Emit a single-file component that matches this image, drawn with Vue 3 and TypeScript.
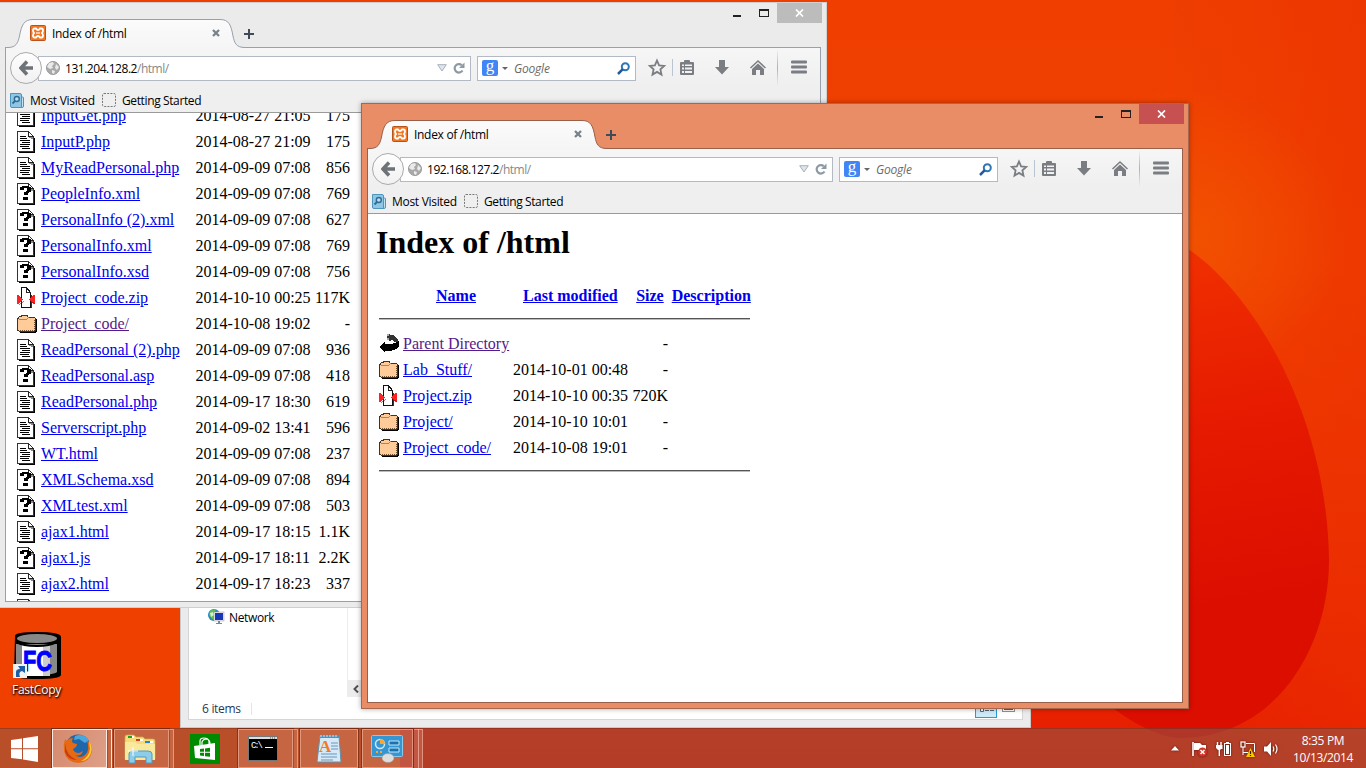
<script setup lang="ts">
type IconKind = 'text' | 'unknown' | 'zip' | 'folder' | 'back'

interface Entry {
  icon: IconKind
  name: string
  date: string
  size: string
  visited?: boolean
}

interface BrowserWindow {
  id: string
  host: string
  active: boolean
  entries: Entry[]
}

const e = (icon: IconKind, name: string, date: string, size: string, visited = false): Entry => ({
  icon, name, date, size, visited,
})

const windows: BrowserWindow[] = [
  {
    id: 'rear',
    host: '131.204.128.2',
    active: false,
    entries: [
      e('text', 'InputGet.php', '2014-08-27 21:05', '175'),
      e('text', 'InputP.php', '2014-08-27 21:09', '175'),
      e('text', 'MyReadPersonal.php', '2014-09-09 07:08', '856'),
      e('unknown', 'PeopleInfo.xml', '2014-09-09 07:08', '769'),
      e('unknown', 'PersonalInfo (2).xml', '2014-09-09 07:08', '627'),
      e('unknown', 'PersonalInfo.xml', '2014-09-09 07:08', '769'),
      e('unknown', 'PersonalInfo.xsd', '2014-09-09 07:08', '756'),
      e('zip', 'Project_code.zip', '2014-10-10 00:25', '117K'),
      e('folder', 'Project_code/', '2014-10-08 19:02', '-', true),
      e('text', 'ReadPersonal (2).php', '2014-09-09 07:08', '936'),
      e('unknown', 'ReadPersonal.asp', '2014-09-09 07:08', '418'),
      e('text', 'ReadPersonal.php', '2014-09-17 18:30', '619'),
      e('text', 'Serverscript.php', '2014-09-02 13:41', '596'),
      e('text', 'WT.html', '2014-09-09 07:08', '237'),
      e('unknown', 'XMLSchema.xsd', '2014-09-09 07:08', '894'),
      e('unknown', 'XMLtest.xml', '2014-09-09 07:08', '503'),
      e('text', 'ajax1.html', '2014-09-17 18:15', '1.1K'),
      e('unknown', 'ajax1.js', '2014-09-17 18:11', '2.2K'),
      e('text', 'ajax2.html', '2014-09-17 18:23', '337'),
      e('text', '', '', ''),
    ],
  },
  {
    id: 'front',
    host: '192.168.127.2',
    active: true,
    entries: [
      e('back', 'Parent Directory', '', '-', true),
      e('folder', 'Lab_Stuff/', '2014-10-01 00:48', '-'),
      e('zip', 'Project.zip', '2014-10-10 00:35', '720K'),
      e('folder', 'Project/', '2014-10-10 10:01', '-'),
      e('folder', 'Project_code/', '2014-10-08 19:01', '-'),
    ],
  },
]
</script>

<template>
  <div class="desktop">
    <svg class="wallpaper" viewBox="0 0 1366 768" preserveAspectRatio="none">
      <defs>
        <linearGradient id="sky" x1="0" y1="0" x2="0" y2="1">
          <stop offset="0" stop-color="#ef3e00" />
          <stop offset="0.35" stop-color="#f14300" />
          <stop offset="0.7" stop-color="#ee3000" />
          <stop offset="1" stop-color="#e61c00" />
        </linearGradient>
        <radialGradient id="glow" gradientUnits="userSpaceOnUse" cx="1190" cy="235" r="150">
          <stop offset="0" stop-color="#f25400" stop-opacity="0.85" />
          <stop offset="1" stop-color="#f25400" stop-opacity="0" />
        </radialGradient>
        <linearGradient id="petal" gradientUnits="userSpaceOnUse" x1="1190" y1="250" x2="1250" y2="600">
          <stop offset="0" stop-color="#f03000" />
          <stop offset="0.5" stop-color="#e61a00" />
          <stop offset="1" stop-color="#dc0e00" />
        </linearGradient>
        <linearGradient id="side" x1="0" y1="0" x2="1" y2="0">
          <stop offset="0.85" stop-color="#ea3000" stop-opacity="0" />
          <stop offset="1" stop-color="#ea3000" stop-opacity="0.5" />
        </linearGradient>
      </defs>
      <rect width="1366" height="768" fill="url(#sky)" />
      <rect y="600" width="400" height="168" fill="#ef4000" />
      <rect width="1366" height="768" fill="url(#side)" />
      <rect x="1000" y="80" width="366" height="320" fill="url(#glow)" />
      <path d="M1100 200Q1150 222 1188 249C1250 290 1327 410 1329 560C1329 650 1274 738 1180 738C1150 736 1120 715 1090 690Z" fill="url(#petal)" />
    </svg>

    <div class="shortcut">
      <svg width="50" height="48" viewBox="0 0 50 48">
        <path d="M3 4Q3 0 25 0Q49 0 49 5V43Q48 47 25 47Q2 47 2 43Z" fill="#000" />
        <path d="M4 12H45V40Q42 43 24 43Q5 43 4 40Z" fill="#888" />
        <path d="M10 13H38V44H10Z" fill="#fff" />
        <path d="M31 13H38V44H31Z" fill="#ccc" />
        <ellipse cx="25" cy="6.500" rx="20" ry="4.500" fill="#888" />
        <path d="M4 9Q12 13 25 13Q38 13 45 9V11Q38 15 25 15Q10 15 4 11Z" fill="#000" />
        <text x="11" y="39" class="fc" textLength="29" lengthAdjust="spacingAndGlyphs">FC</text>
        <rect x="1" y="32" width="14" height="14" fill="#f2f2f2" />
        <path d="M4 45V40Q4 37 8 37L6 34H13V41L10 39Q6 40 8 45Z" fill="#1d5fa5" />
      </svg>
      <span>FastCopy</span>
    </div>

    <section class="explorer">
      <div class="ex-body">
        <aside class="ex-nav">
          <svg width="17" height="16" viewBox="0 0 17 16">
            <circle cx="6" cy="6" r="6" fill="#2686c7" />
            <path d="M2 2Q5-1 8 1L6 4L9 7L6 11Q2 9 1 5Z" fill="#61bd4f" />
            <path d="M2 4L5 3L6 6L3 8Z" fill="#d4f0d0" />
            <rect x="6" y="3" width="10" height="9" fill="#eee" stroke="#99a" stroke-width=".5" />
            <rect x="7" y="4" width="8" height="7" fill="#1637b8" />
            <path d="M10 12H12V14H14V15H8V14H10Z" fill="#789" />
          </svg>
          <span>Network</span>
        </aside>
        <div class="ex-main"><span class="ex-scroll"><svg width="6" height="8" viewBox="0 0 6 8"><path d="M5 .5L1.500 4L5 7.500" fill="none" stroke="#505050" stroke-width="2" /></svg></span></div>
      </div>
      <footer class="ex-status">
        <span class="ex-count">6 items</span>
        <svg width="47" height="18" viewBox="0 0 47 18">
          <rect x=".5" y=".5" width="21" height="17" fill="#cdeaf8" stroke="#2a9bd5" />
          <path d="M5.500 8.500h3v3h-3zM10 10.500h4M15 10.500h4" fill="#fff" stroke="#567" />
          <rect x="27.500" y="2.500" width="12" height="9" fill="#fff" stroke="#8a93a3" />
          <path d="M29 4h9v6h-9z" fill="#2c6e86" />
        </svg>
      </footer>
    </section>

    <section v-for="w in windows" :key="w.id" class="window" :class="[w.id, { active: w.active }]">
      <header class="titlebar">
        <svg class="tabshape" width="260" height="47" viewBox="0 0 260 47">
          <defs>
            <linearGradient :id="'tab-' + w.id" x1="0" y1="0" x2="0" y2="1">
              <stop offset="0" stop-color="#fbfbfb" />
              <stop offset="1" stop-color="#f5f5f5" />
            </linearGradient>
          </defs>
          <path d="M7 45.500H9C17 45.500 19 41 20.500 34C22.500 23 25 17.500 34 17.500H221C230 17.500 232 23 234 34C235.500 41 237 45.500 246 45.500V47H7Z" :fill="'url(#tab-' + w.id + ')'" />
          <path class="edge" d="M7 45.500H9C17 45.500 19 41 20.500 34C22.500 23 25 17.500 34 17.500H221C230 17.500 232 23 234 34C235.500 41 237 45.500 246 45.500" fill="none" />
        </svg>
        <div class="tab">
          <svg width="16" height="16" viewBox="0 0 16 16">
            <rect x=".5" y=".5" width="15" height="15" rx="1" fill="#f37623" stroke="#b95319" />
            <path d="M4.500 3.500H6Q8 6.500 10 3.500H11.500Q13 3.500 13 5.500Q13 7 12 8Q13 9 13 10.500Q13 12.500 11.500 12.500H10Q8 9.500 6 12.500H4.500Q3 12.500 3 10.500Q3 9 4 8Q3 7 3 5.500Q3 3.500 4.500 3.500Z" fill="none" stroke="#fff" stroke-width="1.800" />
            <path d="M6 8H10" stroke="#fff" stroke-width="1.200" />
          </svg>
          <span class="tab-title">Index of /html</span>
          <svg class="tab-x" width="8" height="8" viewBox="0 0 8 8"><path d="M1 1L7 7M7 1L1 7" stroke="#76828c" stroke-width="2.300" /></svg>
        </div>
        <svg class="newtab" width="10" height="10" viewBox="0 0 10 10"><path d="M5 0V10M0 5H10" stroke="#3f4c58" stroke-width="2" /></svg>
        <div class="controls">
          <svg width="36" height="20" viewBox="0 0 36 20" shape-rendering="crispEdges">
            <path d="M0 12h8v2H0z" fill="#222" />
            <path fill-rule="evenodd" d="M26 6h10v8H26zM27 8v5h8v-5z" fill="#222" />
          </svg>
          <span class="close"><svg width="9" height="8" viewBox="0 0 9 8"><path d="M1 .5L8 7.500M8 .5L1 7.500" stroke="#fff" stroke-width="1.700" /></svg></span>
        </div>
      </header>

      <div class="client">
        <div class="chrome">
          <nav class="navbar">
            <span class="back"><svg width="15" height="16" viewBox="0 0 15 16"><path d="M8 1.500L2 8L8 14.500M2.500 8H14" fill="none" stroke="#6e7378" stroke-width="3.500" /></svg></span>
            <div class="urlbar">
              <svg width="14" height="14" viewBox="0 0 14 14">
                <circle cx="7" cy="7" r="6.500" fill="#a9a9a9" stroke="#999" />
                <path d="M3 2L7 1L8 3L6 5L7 7L4 8L1 6ZM10 3L13 6L11 9L9 7ZM6 9L9 10L8 13L6 12Z" fill="#eaeaea" />
              </svg>
              <span class="url">{{ w.host }}<i>/html/</i></span>
              <svg class="drop" width="10" height="8" viewBox="0 0 10 8"><path d="M.7 .7H9.300L5 7Z" fill="#dfe5ea" stroke="#a5b1bb" /></svg>
              <svg width="12" height="12" viewBox="0 0 12 12"><path d="M9.500 8.500A4.200 4.200 0 1 1 8.800 3.300" fill="none" stroke="#8d99a5" stroke-width="2.200" /><path d="M11.500 .5V6H6Z" fill="#8d99a5" /></svg>
            </div>
            <div class="search">
              <span class="g">g</span>
              <svg class="caret" width="6" height="3" viewBox="0 0 6 3"><path d="M0 0H6L3 3Z" fill="#666" /></svg>
              <span class="ph">Google</span>
              <svg width="13" height="13" viewBox="0 0 13 13"><circle cx="8.300" cy="4.700" r="3.500" fill="none" stroke="#2e76b4" stroke-width="2" /><path d="M5.800 7.200L1 12" stroke="#26599b" stroke-width="2.500" /></svg>
            </div>
            <svg class="tools" width="180" height="38" viewBox="0 0 180 38">
              <g fill="#7a7d82">
                <path d="M20 11.500L22.100 16.400L27.200 16.900L23.400 20.400L24.500 25.600L20 22.900L15.500 25.600L16.600 20.400L12.800 16.900L17.900 16.400Z" fill="none" stroke="#7a7d82" stroke-width="1.800" />
                <path fill-rule="evenodd" d="M44 13H47V12Q47 11 48 11H52Q53 11 53 12V13H56Q57 13 57 14V25Q57 26 56 26H44Q43 26 43 25V14Q43 13 44 13ZM45 15.500V17H47V15.500ZM48 15.500V17H55V15.500ZM45 18.500V20.500H47V18.500ZM48 18.500V20.500H55V18.500ZM45 22V24H47V22ZM48 22V24H55V22Z" />
                <path d="M82 11H88V18H92L85 25.500L78 18H82Z" />
                <path d="M121 14.500L127 20V26H123V21H119V26H115V20Z" />
                <path d="M113.500 19L121 12L128.500 19" fill="none" stroke="#7a7d82" stroke-width="1.500" />
                <rect x="154" y="11.500" width="16" height="3" rx="1" />
                <rect x="154" y="16.500" width="16" height="3" rx="1" />
                <rect x="154" y="21.500" width="16" height="3" rx="1" />
              </g>
              <rect x="35" y="10" width="1" height="17" fill="#b9c5d3" />
              <rect x="140" y="0" width="1" height="37" :fill="'url(#div-' + w.id + ')'" />
              <defs>
                <linearGradient :id="'div-' + w.id" x1="0" y1="0" x2="0" y2="1">
                  <stop offset="0" stop-color="#a8afba" stop-opacity="0" />
                  <stop offset="0.5" stop-color="#a8b2c0" />
                  <stop offset="1" stop-color="#a8afba" stop-opacity="0" />
                </linearGradient>
              </defs>
            </svg>
          </nav>
          <div class="bookmarks">
            <svg width="14" height="15" viewBox="0 0 14 15">
              <path d="M10 4H12.500Q13.500 4 13.500 5V13Q13.500 14.500 12 14.500H5" fill="#c1e4f5" stroke="#4d95bd" />
              <path d="M.5 .5H10Q11.500 .5 11.500 2V14.500H2Q.5 14.500 .5 13Z" fill="#8fc6e4" stroke="#4d95bd" />
              <circle cx="6.800" cy="6" r="2.500" fill="#b8def2" stroke="#2f6b94" stroke-width="1.400" />
              <path d="M5 8L2.500 10.500" stroke="#2f6b94" stroke-width="1.800" />
            </svg>
            <span class="mv">Most Visited</span>
            <svg width="14" height="14" viewBox="0 0 14 14"><rect x=".5" y=".5" width="13" height="13" rx="1.500" fill="none" stroke="#777" stroke-dasharray="2 1.200" /></svg>
            <span class="gs">Getting Started</span>
          </div>
        </div>

        <main class="page">
          <template v-if="w.active">
            <h1>Index of /html</h1>
            <div class="row head">
              <a class="c-name">Name</a><a class="c-date">Last modified</a><a class="c-size">Size</a><a>Description</a>
            </div>
            <hr />
          </template>
          <div class="rows">
            <div v-for="(r, i) in w.entries" :key="i" class="row">
              <svg class="ficon" width="20" height="22" viewBox="0 0 20 22" shape-rendering="crispEdges">
                <template v-if="r.icon === 'text' || r.icon === 'unknown'">
                  <path d="M2 20H16V7H18V22H2Z" fill="#000" />
                  <path d="M.5 .5H11.500L16.500 5.500V20.500H.5Z" fill="#fff" stroke="#333" />
                  <path d="M11.500 .5V5.500H16.500" fill="none" stroke="#222" />
                  <path d="M12 6H16V8H14V7H12Z" fill="#888" />
                  <path v-if="r.icon === 'text'" d="M3 5.500H9M3 7.500H10M3 9.500H13M5 11.500H13M3 13.500H13M3 15.500H12M5 17.500H13" stroke="#000" />
                  <path v-else d="M3 7V4H5V3H12V4H14V9H12V10H11V12H7V9H9V8H10V5H7V7ZM6 14H11V17H6Z" fill="#000" />
                </template>
                <template v-else-if="r.icon === 'zip'">
                  <path d="M6 20H14V8H15V21H6Z" fill="#333" />
                  <path d="M4.500 .5H9.500L13.500 5.500V20.500H4.500Z" fill="#fff" stroke="#111" />
                  <path d="M9.500 .5V5.500H13.500" fill="none" stroke="#222" />
                  <path d="M0 7.500H1L6 12V13L1 17H0ZM18 7.500H17L12 12V13L17 17H18Z" fill="#f22" />
                  <path d="M1.500 17.500L6.500 13.500M17.500 17.500L12.500 13.500" stroke="#822" stroke-width=".6" fill="none" />
                </template>
                <template v-else-if="r.icon === 'folder'">
                  <path d="M3 20L2 18H17V6H19L20 7V18L18 20Z" fill="#000" />
                  <path d="M.5 6L2.500 3.500H4L5 2.500H10L11.500 4.500H17.500L18.500 6V17L17 18.500H2.500L.5 17Z" fill="#fc9" stroke="#432" />
                  <path d="M2 6.500H9.500L11.500 4.500" fill="none" stroke="#a85" />
                  <path d="M3 17.500H16M17.500 7V17" fill="none" stroke="#753" stroke-dasharray="1 1" />
                </template>
                <template v-else>
                  <path d="M8 1L14 2L19 6L20 9H15L13 7L10 8L8 5Z" fill="#333" />
                  <path d="M8 1H10V3H8ZM8 5H10V7H8Z" fill="#aaa" />
                  <path d="M0 14L6 9V11H11L16 10L20 8V13L17 16L12 18H6V20Z" fill="#000" />
                </template>
              </svg>
              <a class="name" :class="{ visited: r.visited }">{{ r.name }}</a>
              <span class="date">{{ r.date }}</span>
              <span class="size">{{ r.size }}</span>
            </div>
          </div>
          <hr v-if="w.active" />
        </main>
      </div>
    </section>

    <footer class="taskbar">
      <svg class="start" width="27" height="26" viewBox="0 0 27 26"><path d="M0 4L11 2.500V12.300H0ZM12 2.300L27 0V12.300H12ZM0 13.300H11V23.300L0 22ZM12 13.300H27V26L12 23.600Z" fill="#fff" /></svg>
      <div class="task current one">
        <svg width="30" height="31" viewBox="0 0 30 31">
          <circle cx="15" cy="14" r="12.500" fill="#1f66ab" />
          <path d="M12 3Q20 0 26 7L22 10L16 6L11 7Z" fill="#4aa7de" />
          <path d="M2 6L4 8Q6 5 10 5Q8 8 10 10L14 11Q14 14 10 16Q11 20 16 20L20 18Q18 24 12 22Q17 26 22 22Q26 18 25 12L24 7Q30 12 29 19Q26 30 15 30Q3 29 1 18Q0 12 2 6Z" fill="#e66a16" />
          <path d="M26 8Q30 14 28 20Q25 28 18 28Q26 24 27 16Z" fill="#ffcf38" />
          <path d="M2 10Q3 23 14 27Q5 27 2 19Z" fill="#c93c12" />
        </svg>
      </div>
      <div class="task one">
        <svg width="32" height="30" viewBox="0 0 32 30">
          <path d="M1 3Q1 1 3 1H10L12 3H19L21 5H29Q31 5 31 7V25H1Z" fill="#f4dc7a" stroke="#c7a94a" stroke-width=".7" />
          <path d="M4 2H8V4H4Z" fill="#21a021" /><path d="M12 5H16V7H12Z" fill="#d43b22" /><path d="M21 7H26V9H21Z" fill="#1f86d8" />
          <path d="M8 2H10V4H8ZM16 5H19V7H16ZM26 7H29V9H26Z" fill="#fff" />
          <path d="M1 8H11L13 10H31V26H1Z" fill="#fae99d" />
          <path d="M5 29V20Q5 17 8 17H24Q28 17 28 20V29H22V23H11V29Z" fill="#8ecdea" stroke="#4f9bc3" />
          <path d="M9 13V22M4 17H14" stroke="#fff" stroke-width="1" />
        </svg>
      </div>
      <div class="store">
        <svg width="24" height="24" viewBox="0 0 24 24">
          <path d="M1 9L22 6V23L2 21Z" fill="#fff" />
          <path d="M7 8V4Q7 1 11 1Q15 1 16 4V7M9 8V5Q10 2 14 2Q17 3 17 7" fill="none" stroke="#fff" stroke-width="1.200" />
          <path d="M7 12L11 11.500V14.800H7ZM12 11.400L17 10.700V14.800H12ZM7 15.800H11V19L7 18.500ZM12 15.800H17V19.700L12 19.200Z" fill="#008a00" />
        </svg>
      </div>
      <div class="task one">
        <svg width="30" height="25" viewBox="0 0 30 25">
          <rect x=".5" y=".5" width="29" height="24" fill="#000" stroke="#777" />
          <rect x="1" y="1" width="28" height="2" fill="#ddd" /><path d="M22 2H28" stroke="#555" stroke-dasharray="1 1" />
          <text x="3" y="12" class="prompt" textLength="12">C:\</text><path d="M17 11.500H25" stroke="#fff" />
        </svg>
      </div>
      <div class="task single">
        <svg width="26" height="30" viewBox="0 0 26 30">
          <path d="M4 2H23L25 28H1Z" fill="#d7e9f6" stroke="#628fae" />
          <path d="M4 1H23V4H4Z" fill="#4c93bf" />
          <path d="M5 3V1M8 3V1M11 3V1M14 3V1M17 3V1M20 3V1" stroke="#d3e8f5" />
          <text x="3" y="18" class="wp">A</text>
          <path d="M15 9H22M15 12H22M15 15H22M5 20H21M5 23H21M5 26H17" stroke="#6797bd" />
        </svg>
      </div>
      <div class="task two">
        <svg width="32" height="29" viewBox="0 0 32 29">
          <rect x=".5" y="1.500" width="31" height="21" rx="1" fill="#3696d2" stroke="#89c9eb" />
          <circle cx="9" cy="10" r="4.500" fill="none" stroke="#c9e9fa" stroke-width="1.500" /><path d="M9 10V5A5 5 0 0 1 14 10Z" fill="#fba62d" />
          <path d="M18 7H28V11H18ZM18 14H28V18H18Z" fill="#1772b0" stroke="#c7e6f7" />
          <path d="M5 18H7M9 18H11" stroke="#fba62d" stroke-width="2" />
          <ellipse cx="17" cy="24" rx="6" ry="4.500" fill="#dedede" stroke="#999" stroke-width=".5" />
        </svg>
      </div>
      <div class="tray">
        <svg class="up" width="8" height="5" viewBox="0 0 8 5"><path d="M0 4.500L4 0L8 4.500Z" fill="#fff" /></svg>
        <svg width="15" height="16" viewBox="0 0 15 16"><path d="M1 1V15" stroke="#fff" stroke-width="1.600" /><path d="M2 2H8L10 4H14V10H8L7 9H2Z" fill="#fff" /><circle cx="10.500" cy="11" r="4.500" fill="#d43228" /><path d="M8.500 9L12.500 13M12.500 9L8.500 13" stroke="#fff" stroke-width="1.500" /></svg>
        <svg width="15" height="16" viewBox="0 0 15 16"><path d="M1.500 1V4M5 1V4M3.300 7V15" stroke="#fff" stroke-width="1.400" /><path d="M0 4H6.500V8H5L4 9H2L0 7Z" fill="#fff" /><rect x="8.500" y="2.500" width="6" height="12" fill="none" stroke="#fff" /><path d="M10 1H13V2H10Z" fill="#fff" /><rect x="10" y="4" width="3" height="9" fill="#fff" /></svg>
        <svg width="15" height="16" viewBox="0 0 15 16"><path d="M6 2.500H14.500V11M3 11.500H8M3 6V14" fill="none" stroke="#fff" /><rect x="1" y="1" width="4" height="5" fill="none" stroke="#fff" stroke-width="1.200" /><path d="M6 16L10.500 7L15 16Z" fill="#fdc500" /><path d="M10.500 10V13M10.500 14V15" stroke="#222" stroke-width="1.200" /></svg>
        <svg width="15" height="14" viewBox="0 0 15 14"><path d="M0 4.500H3L7 0V14L3 9.500H0Z" fill="#fff" /><path d="M9 4.500Q10.500 7 9 9.500M11.500 2.500Q14.500 7 11.500 11.500" fill="none" stroke="#fff" stroke-width="1.200" /></svg>
        <div class="clock"><span>8:35 PM</span><span>10/13/2014</span></div>
      </div>
    </footer>
  </div>
</template>

<style>
html,
body {
  margin: 0;
  overflow: hidden;
}
</style>

<style scoped>
.desktop {
  position: relative;
  width: 1366px;
  height: 768px;
  overflow: hidden;
  display: flex;
  flex-direction: column;
  justify-content: flex-end;
  font-family: "Open Sans", "Noto Sans", sans-serif;
  font-size: 12px;
  color: #000;
}
.desktop * { box-sizing: border-box; }
svg { display: block; flex: none; }
span, a { white-space: nowrap; }
.wallpaper { position: absolute; inset: 0; width: 1366px; height: 768px; }

.shortcut {
  position: absolute;
  left: 0;
  top: 632px;
  width: 73px;
  display: flex;
  flex-direction: column;
  align-items: center;
  color: #fff;
  text-shadow: 1px 1px 2px #000, 0 1px 2px #000;
}
.shortcut svg { width: 50px; margin-left: 1px; }
.shortcut span { line-height: 16px; margin-top: 2px; letter-spacing: -0.25px; }
.fc { font: bold 29px "Liberation Sans", sans-serif; fill: #00f; stroke: #00f; stroke-width: 1px; text-shadow: none; }

.explorer {
  position: absolute;
  left: 180px;
  top: 560px;
  width: 851px;
  height: 168px;
  background: #ebebeb;
  border: 1px solid #c9c9c9;
  padding: 0 7px 7px;
  display: flex;
  flex-direction: column;
}
.ex-body { flex: 1; display: flex; background: #fff; border-left: 1px solid #d5d5d5; }
.ex-nav { width: 159px; border-right: 1px solid #ededed; display: flex; align-items: flex-start; gap: 4px; padding: 48px 0 0 19px; height: 136px; }
.ex-nav span { line-height: 17px; letter-spacing: -0.35px; }
.ex-main { flex: 1; height: 136px; display: flex; align-items: flex-end; }
.ex-scroll { width: 17px; height: 17px; background: #ececec; display: flex; align-items: center; padding-left: 5px; }
.ex-status { height: 23px; background: #fff; border: 1px solid #d5d5d5; border-top: 0; display: flex; justify-content: space-between; align-items: center; padding: 1px 0 0 13px; color: #1e395b; }
.ex-count { padding-right: 10px; border-right: 1px solid #e5e5e5; line-height: 12px; letter-spacing: -0.3px; }

.window {
  position: absolute;
  width: 828px;
  height: 606px;
  background: #ebebeb;
  border: 1px solid #cfcfcf;
  display: flex;
  flex-direction: column;
  padding: 0 5px 5px;
  --edge: #98a0ad;
}
.rear { left: -1px; top: 2px; }
.front { left: 361px; top: 103px; }
.active { background: #e98d66; border-color: #a5674d; --edge: #98604a; box-shadow: 0 0 5px rgba(0, 0, 0, 0.35); }
.titlebar { position: relative; height: 44px; flex: none; display: flex; align-items: flex-start; }
.tabshape { position: absolute; left: -6px; top: -1px; z-index: 1; }
.edge { stroke: var(--edge); }
.tab { position: relative; z-index: 2; display: flex; align-items: center; width: 218px; height: 28px; margin-top: 16px; padding-left: 25px; }
.tab-title { margin-left: 6px; flex: 1; letter-spacing: -0.3px; }
.tab-x { margin-right: 3px; }
.newtab { position: relative; z-index: 2; margin: 26px 0 0 21px; }
.controls { margin-left: auto; display: flex; margin-right: -1px; }
.close { margin-left: 8px; width: 45px; height: 20px; background: #bcbcbc; display: flex; align-items: center; justify-content: center; }
.active .close { background: #c75050; }

.client { flex: 1; min-height: 0; border: 1px solid var(--edge); display: flex; flex-direction: column; background: #fff; margin: 0; }
.chrome { height: 65px; flex: none; border-bottom: 1px solid #9a9a9a; background: linear-gradient(#f6f6f6, #efefef 38px, #efefef); }
.navbar { height: 40px; display: flex; align-items: center; padding-left: 4px; }
.back { width: 32px; height: 32px; border-radius: 50%; border: 1px solid #aaa; background: linear-gradient(#fefefe, #f1f1f1); display: flex; align-items: center; justify-content: center; flex: none; z-index: 1; }
.urlbar { flex: none; width: 433px; height: 25px; margin-left: -4px; border: 1px solid #b1bac5; background: #fff; display: flex; align-items: center; padding: 0 5px 0 7px; }
.url { margin-left: 5px; flex: 1; letter-spacing: -0.47px; }
.url i { font-style: normal; color: #888; }
.drop { margin-right: 6px; }
.search { flex: none; width: 159px; height: 25px; margin-left: 6px; border: 1px solid #b1bac5; background: #fff; display: flex; align-items: center; padding: 0 5px 0 4px; }
.g { width: 16px; height: 16px; border-radius: 2px; background: #4285f4; color: #fff; font: 17px/11px "Liberation Serif", serif; text-align: center; }
.caret { margin: 0 6px 0 4px; }
.ph { flex: 1; font-style: italic; color: #6a6a6a; letter-spacing: -0.2px; }
.tools { margin-left: 1px; }
.bookmarks { height: 24px; display: flex; align-items: center; padding-left: 4px; }
.mv { margin: 0 0 0 6px; width: 72px; letter-spacing: -0.3px; }
.gs { margin-left: 6px; letter-spacing: -0.38px; }

.page { flex: 1; min-height: 0; overflow: hidden; font: 16px/26px "Liberation Serif", "Times New Roman", serif; padding: 0 0 0 11px; }
.rear .rows { margin-top: -10px; }
.row { height: 26px; display: flex; align-items: center; }
.name { width: 154.5px; margin-left: 4px; }
.front .name { width: 110px; }
a { color: #00e; text-decoration: underline; }
.visited { color: #551a8b; }
.date { width: 115px; }
.size { width: 39.5px; text-align: right; }
.front .size { width: 40px; }
h1 { font-size: 32px; line-height: 36px; margin: 10px 0 23px -3px; height: 36px; }
.head { font-weight: bold; padding-left: 57px; }
.c-name { margin-right: 47px; }
.c-date { margin-right: 18.5px; }
.c-size { margin-right: 8px; }
hr { width: 371px; height: 2px; margin: 9px 0 11px; border: 0; background: #bbb; border-top: 1px solid #555; }
.rows + hr { margin-top: 9px; }

.taskbar { position: relative; z-index: 3; height: 40px; display: flex; align-items: center; background: rgba(130, 94, 80, 0.5); border-top: 1px solid rgba(100, 30, 15, 0.35); }
.start { margin: 0 14px 0 11px; }
.task { position: relative; width: 55px; height: 39px; border: 1px solid rgba(255, 205, 190, 0.5); background: rgba(255, 190, 170, 0.2); display: flex; align-items: center; justify-content: center; margin-right: 7px; padding-right: 4px; outline: 1px solid rgba(90, 25, 10, 0.5); }
.one::after,
.two::after,
.two::before { content: ""; position: absolute; left: 54px; top: -1px; width: 4px; height: 39px; border: 1px solid rgba(255, 205, 190, 0.5); border-left: 0; background: rgba(255, 190, 170, 0.2); }
.single { width: 58px; margin-right: 4px; padding-right: 0; }
.two { width: 51px; padding-right: 2px; }
.two::after { left: 51px; }
.two::before { left: 55px; }
.current { background: linear-gradient(115deg, rgba(255, 225, 215, 0.4), rgba(255, 225, 215, 0.55)); border-color: rgba(255, 245, 240, 0.9); }
.current::after { border-color: rgba(255, 245, 240, 0.9); }
.store { width: 30px; height: 30px; margin: 0 18px 0 14px; background: #008a00; display: flex; align-items: center; justify-content: center; }
.store + .task { padding-right: 5px; }
.prompt { font: 9px "Liberation Mono", monospace; fill: #fff; }
.wp { font: bold 17px "Liberation Serif", serif; fill: #f17a21; }
.tray { margin-left: auto; display: flex; align-items: center; gap: 9px; color: #fff; }
.tray svg { filter: drop-shadow(0 0 1px rgba(60, 10, 0, 0.8)); }
.up { margin-right: 4px; }
.clock { display: flex; flex-direction: column; align-items: center; width: 86px; line-height: 17px; margin-left: -8px; letter-spacing: -0.35px; }
</style>
